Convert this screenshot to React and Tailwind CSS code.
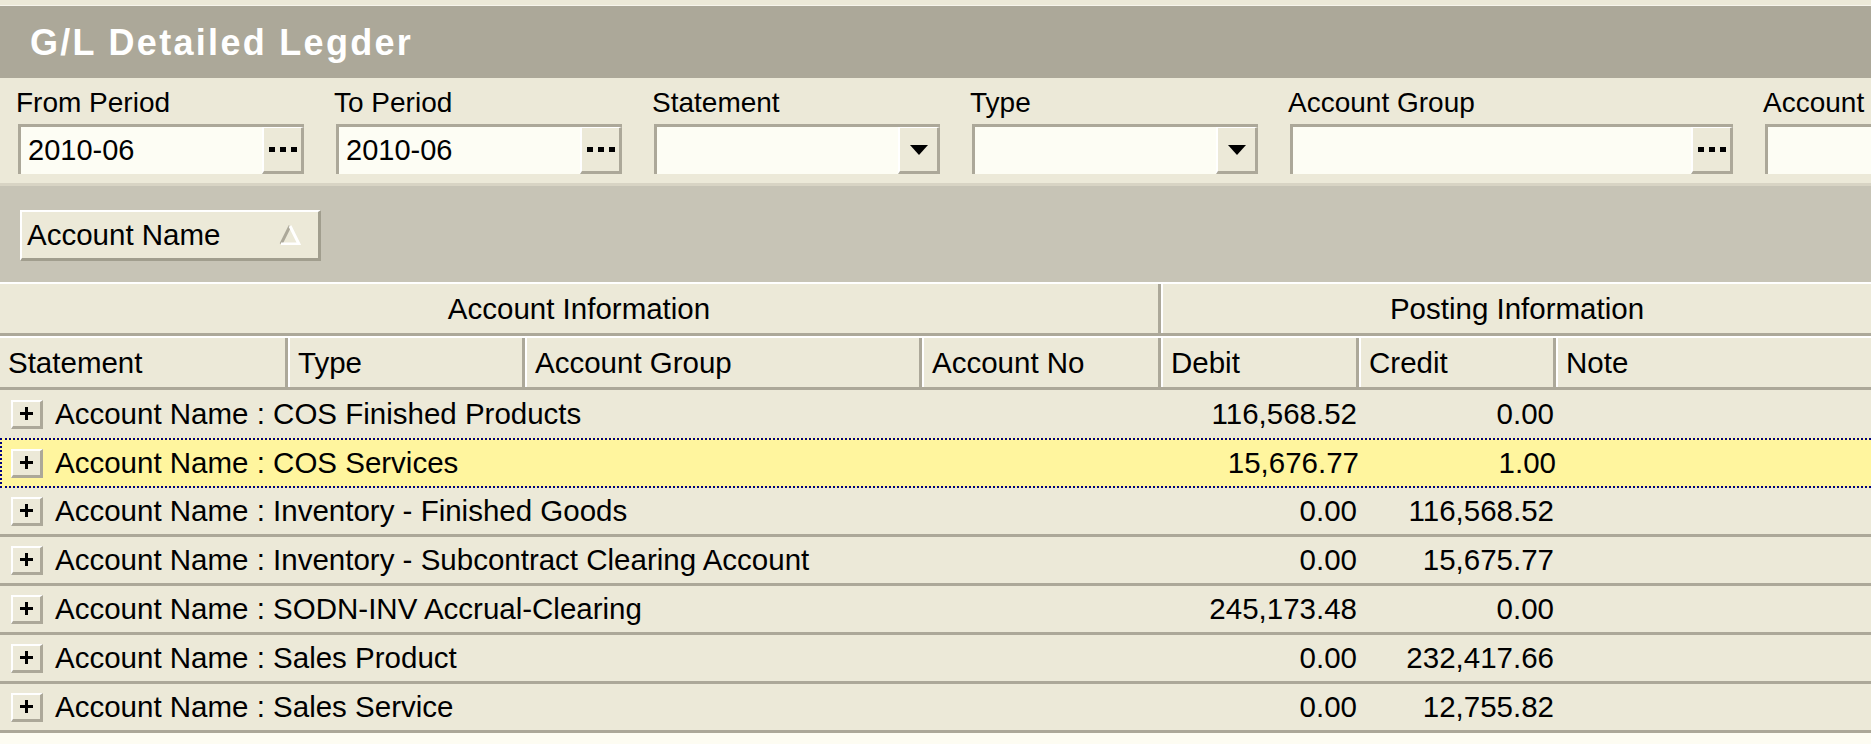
// GLDetailedLedger.jsx
import React from 'react';

const font = { fontFamily: '"Liberation Sans", Arial, sans-serif' };

const filters = [
  { label: 'From Period', value: '2010-06', width: 'w-[286px]', button: 'dots' },
  { label: 'To Period', value: '2010-06', width: 'w-[286px]', button: 'dots' },
  { label: 'Statement', value: '', width: 'w-[286px]', button: 'arrow' },
  { label: 'Type', value: '', width: 'w-[286px]', button: 'arrow' },
  { label: 'Account Group', value: '', width: 'w-[443px]', button: 'dots' },
  { label: 'Account', value: '', width: 'w-[300px]', button: null },
];

const columns = [
  { name: 'Statement', width: 'w-[288px]' },
  { name: 'Type', width: 'w-[237px]' },
  { name: 'Account Group', width: 'w-[397px]' },
  { name: 'Account No', width: 'w-[239px]' },
  { name: 'Debit', width: 'w-[198px]' },
  { name: 'Credit', width: 'w-[197px]' },
  { name: 'Note', width: 'flex-1' },
];

const rows = [
  { name: 'COS Finished Products', debit: '116,568.52', credit: '0.00' },
  { name: 'COS Services', debit: '15,676.77', credit: '1.00', focus: true },
  { name: 'Inventory - Finished Goods', debit: '0.00', credit: '116,568.52' },
  { name: 'Inventory - Subcontract Clearing Account', debit: '0.00', credit: '15,675.77' },
  { name: 'SODN-INV Accrual-Clearing', debit: '245,173.48', credit: '0.00' },
  { name: 'Sales Product', debit: '0.00', credit: '232,417.66' },
  { name: 'Sales Service', debit: '0.00', credit: '12,755.82' },
];

const Dots = () => (
  <div className="flex gap-[5px]">
    <span className="block w-[6px] h-[5px] bg-black" />
    <span className="block w-[6px] h-[5px] bg-black" />
    <span className="block w-[6px] h-[5px] bg-black" />
  </div>
);

const Arrow = () => (
  <svg width="18" height="10" viewBox="0 0 18 10">
    <polygon points="0,0 18,0 9,10" fill="#000" />
  </svg>
);

const FilterField = ({ label, value, width, button }) => (
  <div className={`${width} shrink-0 flex flex-col`}>
    <div className="h-[32px] leading-[32px] text-[28px] text-black -ml-[2px] whitespace-nowrap">{label}</div>
    <div className="mt-[5px] h-[50px] flex bg-[#fdfdf4] border-t-[3px] border-l-[3px] border-[#aca899]">
      <div className="flex-1 pl-[7px] text-[29px] leading-[47px] text-black">{value}</div>
      {button && (
        <div className="w-[42px] h-full flex items-center justify-center bg-[#ece9d8] border-l-2 border-t border-white border-b-[3px] border-r-[3px] border-b-[#aca899] border-r-[#aca899]">
          {button === 'dots' ? <Dots /> : <Arrow />}
        </div>
      )}
    </div>
  </div>
);

const PlusBox = () => (
  <div className="w-[32px] h-[29px] flex items-center justify-center bg-[#ece9d8] border-t-2 border-l-2 border-white border-b-[3px] border-r-[3px] border-b-[#aca899] border-r-[#aca899]">
    <svg width="13" height="13" viewBox="0 0 13 13">
      <rect x="5" y="0" width="3" height="13" fill="#000" />
      <rect x="0" y="5" width="13" height="3" fill="#000" />
    </svg>
  </div>
);

const App = () => {
  return (
    <div className="w-[1871px] h-[744px] overflow-hidden bg-[#fdfcf2] flex flex-col text-black" style={font}>
      {/* title */}
      <div className="h-[6px] bg-[#ece9d8] border-b border-[#f7f5ec]" />
      <div className="h-[72px] bg-[#aca899] flex items-center pl-[30px] pt-[2px]">
        <span className="text-white font-bold text-[36px] tracking-[2.3px] leading-none">G/L Detailed Legder</span>
      </div>

      {/* filters */}
      <div className="bg-[#ece9d8] pt-[9px] pb-[9px] pl-[18px] flex gap-[32px] overflow-hidden border-b-[3px] border-[#d8d4c4]">
        {filters.map((f) => (
          <FilterField key={f.label} {...f} />
        ))}
      </div>

      {/* group by area */}
      <div className="h-[96px] bg-[#c7c4b6] pl-[20px] pt-[24px]">
        <div className="w-[301px] h-[51px] flex items-center justify-between bg-[#ece9d8] border-t-2 border-l-2 border-white border-b-[3px] border-r-[3px] border-b-[#a19e8e] border-r-[#a19e8e] pl-[5px] pr-[17px]">
          <span className="text-[29.5px] leading-none">Account Name</span>
          <svg width="22" height="20" viewBox="0 0 22 20">
            <polyline points="2,19 11,1" stroke="#aca899" strokeWidth="3" fill="none" />
            <polyline points="11,1 20,19 2,19" stroke="#fff" strokeWidth="3" fill="none" />
          </svg>
        </div>
      </div>

      {/* band header */}
      <div className="h-[54px] flex bg-[#ece9d8] border-t-2 border-white border-b-[3px] border-b-[#aca899]">
        <div className="w-[1161px] flex items-center justify-center text-[29.5px] border-r-[3px] border-[#aca899] pt-[2px]">
          Account Information
        </div>
        <div className="flex-1 flex items-center justify-center text-[29.5px] border-l-2 border-white pt-[2px]">
          Posting Information
        </div>
      </div>

      {/* column header */}
      <div className="h-[54px] flex bg-[#ece9d8] border-t-2 border-white border-b-[3px] border-b-[#aca899]">
        {columns.map((c, i) => (
          <div
            key={c.name}
            className={`${c.width} flex items-center pl-[8px] pt-[2px] text-[29.5px] ${i > 0 ? 'border-l-2 border-l-white' : ''} ${i < columns.length - 1 ? 'border-r-[3px] border-r-[#aca899]' : ''}`}
          >
            {c.name}
          </div>
        ))}
      </div>

      {/* rows */}
      <div className="flex flex-col">
        {rows.map((r, i) => {
          const beforeFocus = rows[i + 1] && rows[i + 1].focus;
          let cls = 'h-[49px] bg-[#ece9d8] border-b-[3px] border-[#aca899]';
          if (r.focus) cls = 'h-[50px] bg-[#fff59e] border-2 border-r-0 border-dotted border-[#000080]';
          else if (beforeFocus) cls = 'h-[48px] bg-[#ece9d8]';
          return (
            <div key={r.name} className={`${cls} flex items-center text-[29.5px]`}>
              <div className={`w-[1161px] flex items-center gap-[12px] ${r.focus ? 'pl-[9px]' : 'pl-[11px]'}`}>
                <PlusBox />
                <span className="whitespace-nowrap">Account Name : {r.name}</span>
              </div>
              <div className="w-[198px] text-right pr-[2px]">{r.debit}</div>
              <div className="w-[197px] text-right pr-[2px]">{r.credit}</div>
              <div className="flex-1" />
            </div>
          );
        })}
      </div>
    </div>
  );
};

export default App;
